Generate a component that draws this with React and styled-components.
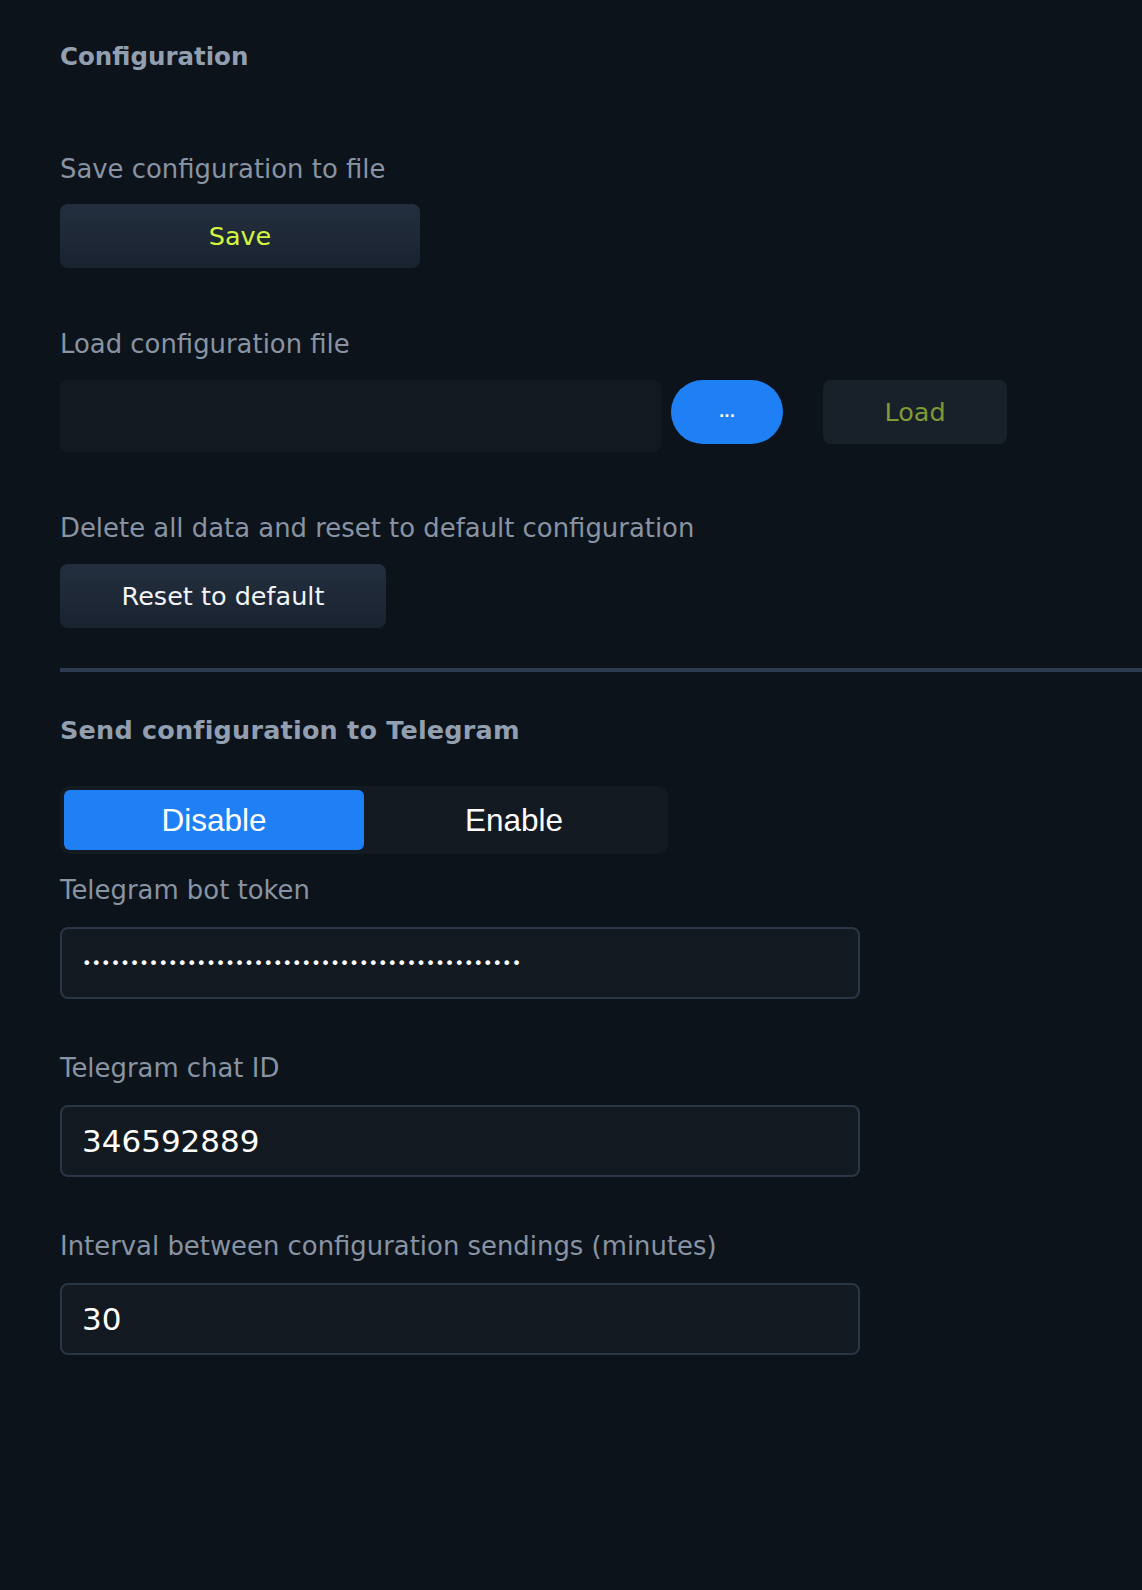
import styled, { createGlobalStyle } from "styled-components";

const GlobalStyle = createGlobalStyle`
    html, body {
        margin: 0;
        background: #0d131a;
    }
    body {
        font-family: "DejaVu Sans", sans-serif;
    }
`;

const App = () => {
    return (
        <Page>
            <GlobalStyle />
            <Title>Configuration</Title>

            <Field $gap={82}>
                <Label $space={20}>Save configuration to file</Label>
                <ActionButton $width={360} $tone="#d3f53d">Save</ActionButton>
            </Field>

            <Field $gap={61}>
                <Label>Load configuration file</Label>
                <FileRow>
                    <FileBox />
                    <BrowseButton>...</BrowseButton>
                    <LoadButton>Load</LoadButton>
                </FileRow>
            </Field>

            <Field $gap={61}>
                <Label>Delete all data and reset to default configuration</Label>
                <ActionButton $width={326} $tone="#f2f4f6">Reset to default</ActionButton>
            </Field>

            <Divider />

            <Heading>Send configuration to Telegram</Heading>

            <Segmented>
                <Segment $active>Disable</Segment>
                <Segment>Enable</Segment>
            </Segmented>

            <Field $gap={21}>
                <Label $space={22}>Telegram bot token</Label>
                <TextInput type="password" readOnly defaultValue={"x".repeat(46)} />
            </Field>

            <Field $gap={54}>
                <Label $space={22}>Telegram chat ID</Label>
                <TextInput type="text" readOnly defaultValue="346592889" />
            </Field>

            <Field $gap={54}>
                <Label $space={22}>Interval between configuration sendings (minutes)</Label>
                <TextInput type="text" readOnly defaultValue="30" />
            </Field>
        </Page>
    );
};

const Page = styled.div`
    box-sizing: border-box;
    min-height: 1590px;
    padding: 42px 0 120px 60px;
    background: #0d131a;
`;

const Title = styled.h2`
    margin: 0;
    font-size: 24.5px;
    line-height: 30px;
    font-weight: 700;
    color: #929fb0;
`;

const Heading = styled(Title)`
    margin-top: 43px;
    font-size: 25.5px;
    letter-spacing: 0.2px;
`;

const Field = styled.div`
    margin-top: ${(p) => p.$gap}px;
`;

const Label = styled.div`
    font-size: 25.9px;
    line-height: 30px;
    color: #8894a3;
    margin-bottom: ${(p) => p.$space ?? 21}px;
`;

const ActionButton = styled.button`
    display: block;
    width: ${(p) => p.$width}px;
    height: 64px;
    border: none;
    border-radius: 8px;
    background: linear-gradient(180deg, #232f3e 0%, #1a2330 100%);
    color: ${(p) => p.$tone};
    font-family: "DejaVu Sans", sans-serif;
    font-size: 25.5px;
    cursor: pointer;
`;

const FileRow = styled.div`
    display: flex;
    align-items: flex-start;
`;

const FileBox = styled.div`
    width: 601px;
    height: 72px;
    border-radius: 8px;
    background: #131920;
`;

const BrowseButton = styled.button`
    width: 112px;
    height: 64px;
    margin-left: 10px;
    border: none;
    border-radius: 32px;
    background: #1f80f5;
    color: #ffffff;
    font-family: "DejaVu Sans", sans-serif;
    font-size: 14px;
    font-weight: 700;
`;

const LoadButton = styled.button`
    width: 184px;
    height: 64px;
    margin-left: 40px;
    border: none;
    border-radius: 8px;
    background: #18202a;
    color: #7f9a36;
    font-family: "DejaVu Sans", sans-serif;
    font-size: 25.5px;
`;

const Divider = styled.hr`
    margin: 40px 0 0;
    height: 4px;
    border: none;
    background: #2c3b4d;
`;

const Segmented = styled.div`
    display: flex;
    box-sizing: border-box;
    width: 608px;
    height: 68px;
    margin-top: 41px;
    padding: 4px;
    border-radius: 10px;
    background: #141a22;
`;

const Segment = styled.button`
    flex: 1;
    border: none;
    border-radius: 6px;
    background: ${(p) => (p.$active ? "#1f80f5" : "transparent")};
    color: #ffffff;
    font-family: "Liberation Sans", Arial, sans-serif;
    font-size: 31.5px;
`;

const TextInput = styled.input`
    display: block;
    box-sizing: border-box;
    width: 800px;
    height: 72px;
    padding: 0 20px;
    border: 2px solid #2a3646;
    border-radius: 8px;
    background: #131920;
    color: #ffffff;
    font-family: "DejaVu Sans", sans-serif;
    font-size: ${(p) => (p.type === "password" ? "16.2px" : "31px")};
    outline: none;
`;

export default App;
